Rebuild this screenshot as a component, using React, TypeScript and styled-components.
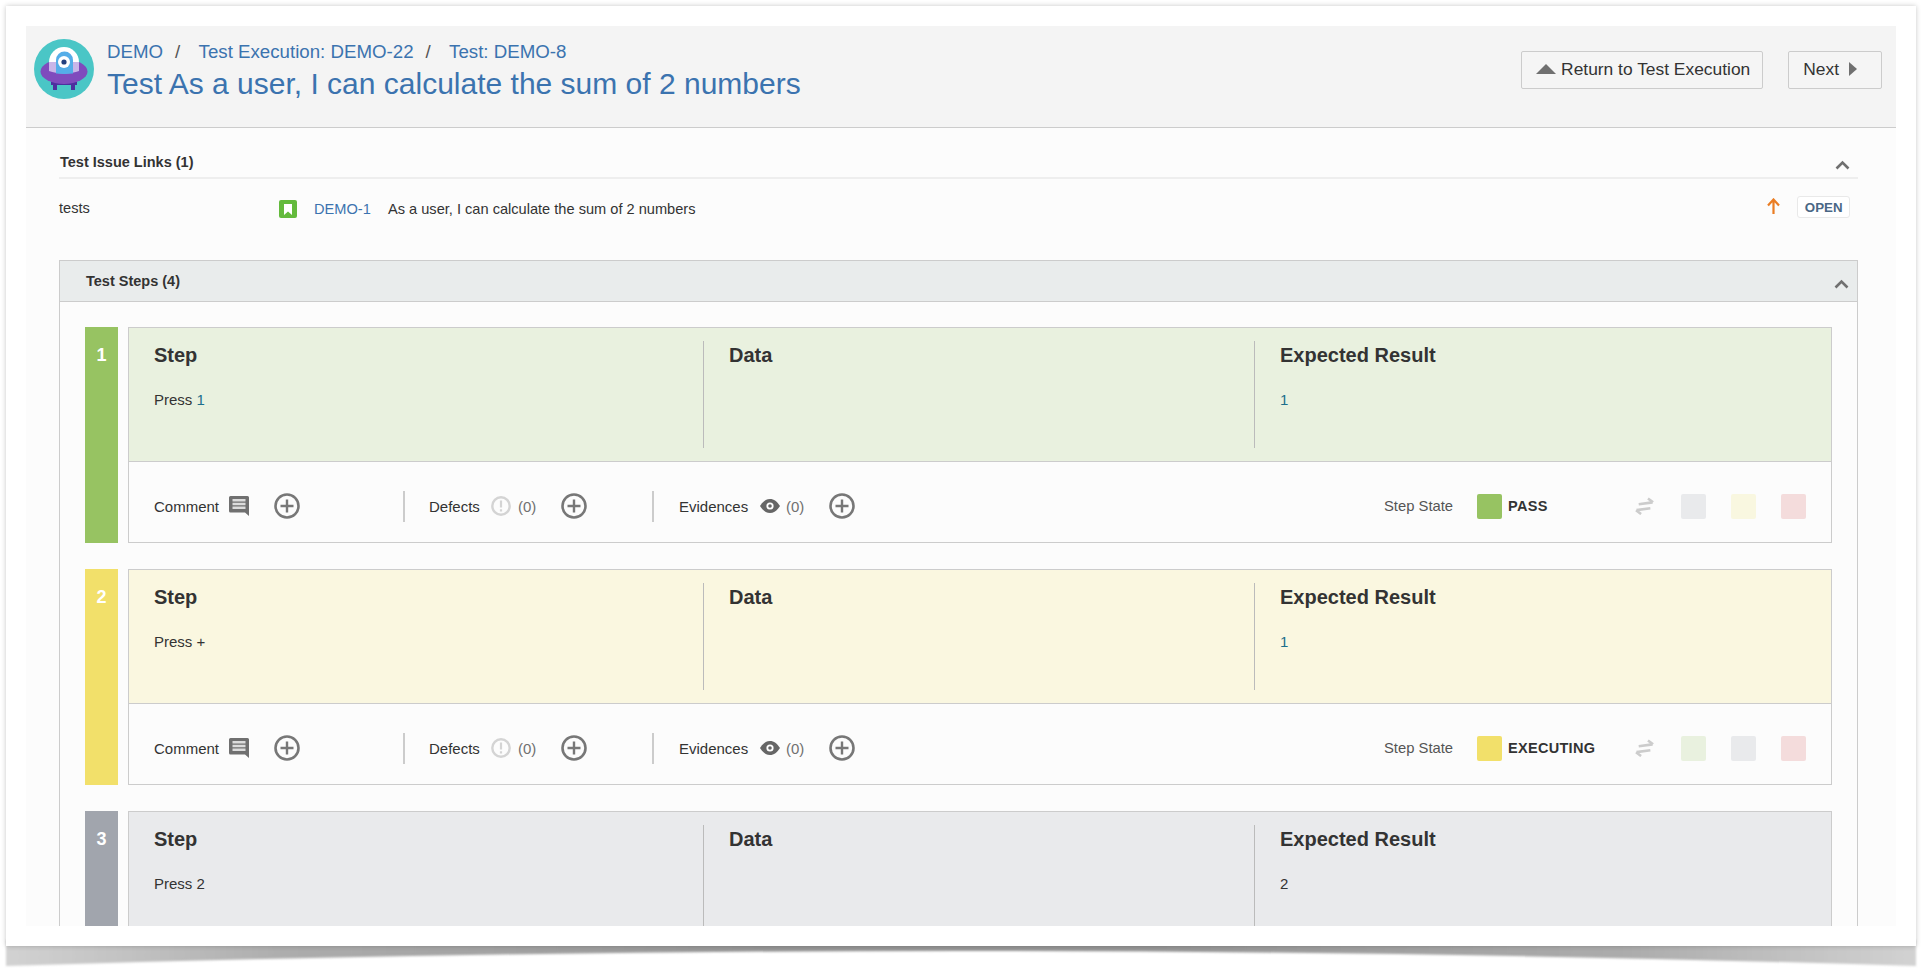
import React from 'react'
import styled, { createGlobalStyle } from 'styled-components'

const GlobalStyle = createGlobalStyle`
  html, body {
    margin: 0;
    background: #fff;
  }
  body {
    height: 975px;
    overflow: hidden;
    font-family: "Liberation Sans", Arial, sans-serif;
    color: #333;
  }
`

const Page = styled.div`
  position: relative;
  width: 1930px;
  height: 975px;
  padding: 6px 0 0 6px;
  box-sizing: border-box;
`

const PaperShadow = styled.svg`
  position: absolute;
  left: 0;
  top: 936px;
  width: 1930px;
  height: 39px;
`

const Card = styled.div`
  position: relative;
  width: 1910px;
  height: 940px;
  padding: 20px;
  box-sizing: border-box;
  background: #fff;
  box-shadow: 0 0 5px rgba(0, 0, 0, 0.22);
`

const Panel = styled.div`
  height: 900px;
  overflow: hidden;
  background: #fcfcfc;
`

const Header = styled.header`
  display: flex;
  height: 102px;
  box-sizing: border-box;
  padding: 13px 14px 0 8px;
  background: #f4f4f4;
  border-bottom: 1px solid #ccc;
`

const Titles = styled.div`
  margin-left: 13px;
  flex: 1;
`

const Crumbs = styled.div`
  display: flex;
  height: 26px;
  align-items: center;
  font-size: 18.7px;
`

const CrumbLink = styled.a`
  color: #3b73af;
`

const CrumbSep = styled.span`
  width: 35.5px;
  padding-left: 12px;
  box-sizing: border-box;
  color: #555;
`

const Title = styled.h1`
  margin: 1px 0 0;
  font-size: 30px;
  font-weight: 400;
  line-height: 36px;
  color: #3b73af;
`

const Actions = styled.div`
  display: flex;
  gap: 25px;
  padding-top: 12px;
`

const Button = styled.button<{ $right: number }>`
  display: flex;
  align-items: center;
  gap: 5px;
  height: 38px;
  padding: 0 ${p => p.$right}px 2px 14px;
  background: #f5f5f5;
  border: 1px solid #ccc;
  border-radius: 2px;
  color: #333;
  font-family: inherit;
  font-size: 17.4px;
`

const Body = styled.div`
  padding: 0 38px 0 33px;
`

const SectionHead = styled.div`
  display: flex;
  align-items: center;
  justify-content: space-between;
  height: 31px;
  padding: 18px 8px 0 1px;
  border-bottom: 2px solid #eee;
`

const SectionTitle = styled.h3`
  margin: 0;
  font-size: 14.5px;
  font-weight: 700;
  color: #333;
`

const LinkRow = styled.div`
  display: flex;
  align-items: flex-start;
  height: 81px;
  padding: 20px 8px 0 0;
  box-sizing: border-box;
  font-size: 14.6px;
`

const LinkType = styled.span`
  width: 220px;
  line-height: 18px;
`

const StoryBadge = styled.span`
  display: flex;
  justify-content: center;
  width: 18px;
  height: 18px;
  margin: 1px 17px 0 0;
  background: #63ba3c;
  border-radius: 2px;
`

const IssueKey = styled.a`
  width: 74px;
  line-height: 20px;
  color: #3b73af;
`

const IssueSummary = styled.span`
  flex: 1;
  line-height: 20px;
`

const PriorityMark = styled.svg`
  margin: -1px 17px 0 0;
`

const Lozenge = styled.span`
  display: flex;
  align-items: center;
  height: 20px;
  margin-top: -3px;
  padding: 0 6.5px;
  background: #fff;
  border: 1px solid #e9e9e9;
  border-radius: 3px;
  color: #4a6785;
  font-size: 13.3px;
  font-weight: 700;
`

const StepsBox = styled.section`
  border: 1px solid #ccc;
  border-bottom: 0;
`

const StepsHead = styled.div`
  display: flex;
  align-items: center;
  justify-content: space-between;
  height: 40px;
  padding: 0 8px 0 26px;
  background: #e9ecec;
  border-bottom: 1px solid #ccc;
`

const StepsList = styled.div`
  display: flex;
  flex-direction: column;
  gap: 26px;
  padding: 25px 25px 0;
`

const Step = styled.article`
  display: flex;
  gap: 10px;
  height: 216px;
`

const StepIndex = styled.div<{ $color: string }>`
  width: 33px;
  padding-top: 14px;
  box-sizing: border-box;
  background: ${p => p.$color};
  color: #fff;
  font-size: 18px;
  font-weight: 700;
  line-height: 28px;
  text-align: center;
`

const StepBox = styled.div`
  display: flex;
  flex: 1;
  flex-direction: column;
  border: 1px solid #ccc;
`

const StepFields = styled.div<{ $color: string }>`
  display: grid;
  grid-template-columns: 575px 551px 1fr;
  height: 107px;
  padding: 13px 0;
  background: ${p => p.$color};
  border-bottom: 1px solid #ccc;
`

const Field = styled.div<{ $last?: boolean }>`
  padding-left: 25px;
  border-right: ${p => (p.$last ? '0' : '1px solid #bbb')};
  font-size: 15px;
`

const FieldTitle = styled.h4`
  margin: 0 0 21px;
  font-size: 20px;
  font-weight: 700;
  line-height: 28px;
  color: #333;
`

const FieldValue = styled.div`
  line-height: 20px;
`

const Accent = styled.span`
  color: #1d6f8c;
`

const StepFooter = styled.div`
  display: flex;
  flex: 1;
  align-items: center;
  padding: 8px 25px 0 0;
  background: #fcfcfc;
  font-size: 15px;
`

const FooterGroup = styled.div<{ $width: number; $pad: number; $divided?: boolean }>`
  display: flex;
  align-items: center;
  width: ${p => p.$width}px;
  height: 31px;
  padding-left: ${p => p.$pad}px;
  box-sizing: border-box;
  border-left: ${p => (p.$divided ? '2px solid #ccc' : '0')};
`

const FooterLabel = styled.span<{ $width: number }>`
  width: ${p => p.$width}px;
`

const Count = styled.span<{ $width: number }>`
  width: ${p => p.$width}px;
  color: #707070;
`

const FooterIcon = styled.svg<{ $gap: number }>`
  margin-right: ${p => p.$gap}px;
`

const StateLabel = styled.span`
  margin-left: auto;
  width: 93px;
  font-size: 14.8px;
  color: #555;
`

const Swatch = styled.span<{ $color: string }>`
  display: block;
  width: 25px;
  height: 25px;
  background: ${p => p.$color};
  border-radius: 2px;
`

const StateName = styled.span`
  width: 131px;
  padding-left: 6px;
  box-sizing: border-box;
  font-size: 14.5px;
  font-weight: 700;
  letter-spacing: 0.3px;
`

const SwapIcon = styled.svg`
  margin-right: 25px;
`

const Swatches = styled.div`
  display: flex;
  gap: 25px;
`

const ChevronIcon = styled.svg`
  margin-top: 6px;
`

const Chevron = () => (
  <ChevronIcon width="15" height="10" viewBox="0 0 15 10">
    <path d="M1.5 8.5 7.5 2.5l6 6" fill="none" stroke="#707070" strokeWidth="2.6" />
  </ChevronIcon>
)

const Logo = () => (
  <svg width="60" height="60" viewBox="0 0 60 60">
    <circle cx="30" cy="30" r="30" fill="#4ac6c6" />
    <path d="M17 43h26v3h-2v5h-4v-5H23v5h-4v-5h-2z" fill="#4d2f9e" />
    <ellipse cx="30" cy="32.500" rx="23.500" ry="12.500" fill="#7f4bbd" />
    <path d="M15 23a15 15 0 0 1 30 0z" fill="#fff" />
    <path d="M15 23h30v9c-4 1.600-9 2.500-15 2.500s-11-.9-15-2.500z" fill="#c9b6e8" />
    <path d="M22 34.500V21a8.500 8.500 0 0 1 17 0v13.500c-5 .5-12 .5-17 0z" fill="#55ade8" />
    <circle cx="30" cy="23" r="6" fill="#fff" />
    <circle cx="30" cy="23" r="2.600" fill="#24407f" />
  </svg>
)

const StoryIcon = () => (
  <svg width="8" height="11" viewBox="0 0 8 11" style={{ marginTop: 4 }}>
    <path d="M0 0h8v11L4 7.500 0 11z" fill="#fff" />
  </svg>
)

const CommentIcon = () => (
  <FooterIcon $gap={25} width="20" height="20" viewBox="0 0 20 20">
    <path d="M0 1.500A1.500 1.500 0 0 1 1.500 0h17A1.500 1.500 0 0 1 20 1.500V20l-4-3.500H1.500A1.500 1.500 0 0 1 0 15z" fill="#707070" />
    <path d="M3.500 4.200h13M3.500 8h13M3.500 11.800h13" stroke="#dcdcdc" strokeWidth="2.400" />
  </FooterIcon>
)

const DefectIcon = () => (
  <FooterIcon $gap={7} width="20" height="20" viewBox="0 0 20 20">
    <circle cx="10" cy="10" r="8.700" fill="none" stroke="#d4d4d4" strokeWidth="2.400" />
    <path d="M10 4.500v7M10 13.300v2.200" stroke="#d4d4d4" strokeWidth="2.200" />
  </FooterIcon>
)

const EyeIcon = () => (
  <FooterIcon $gap={6} width="20" height="14" viewBox="0 0 20 14">
    <path d="M0 7c3-4.500 6-7 10-7s7 2.500 10 7c-3 4.500-6 7-10 7S3 11.500 0 7z" fill="#666" />
    <circle cx="10" cy="7" r="3.600" fill="#fff" />
    <circle cx="10" cy="7" r="1.800" fill="#666" />
  </FooterIcon>
)

const PlusIcon = () => (
  <svg width="26" height="26" viewBox="0 0 26 26">
    <circle cx="13" cy="13" r="11.500" fill="none" stroke="#777" strokeWidth="2.600" />
    <path d="M13 6.500v13M6.500 13h13" stroke="#777" strokeWidth="2.400" />
  </svg>
)

const Swap = () => (
  <SwapIcon width="23" height="18" viewBox="0 0 23 18">
    <g transform="rotate(-8 11.500 9)" fill="none" stroke="#ccc" strokeWidth="2.600">
      <path d="M6 6.500h14M16 2l4.500 4.500" />
      <path d="M17 12H3M7 16.500 2.500 12" />
    </g>
  </SwapIcon>
)

const steps = [
  {
    n: 1,
    bar: '#97c362',
    bg: '#e9f1df',
    step: <>Press <Accent>1</Accent></>,
    result: <Accent>1</Accent>,
    state: 'PASS',
    others: ['#e9eaec', '#f9f7e0', '#f4dcdc'],
  },
  {
    n: 2,
    bar: '#f2e06a',
    bg: '#faf7e0',
    step: <>Press +</>,
    result: <Accent>1</Accent>,
    state: 'EXECUTING',
    others: ['#e9f1df', '#e9eaec', '#f4dcdc'],
  },
  {
    // runs past the fold, only the fields part is ever visible
    n: 3,
    bar: '#a1a5ad',
    bg: '#e9eaec',
    step: <>Press 2</>,
    result: <>2</>,
  },
]

const App = () => (
  <Page>
    <GlobalStyle />
    <PaperShadow viewBox="0 0 1930 39">
      <defs>
        <linearGradient id="paperShade">
          <stop offset="0" stopColor="#d2d2d2" />
          <stop offset="0.15" stopColor="#acacac" />
          <stop offset="0.4" stopColor="#969696" />
          <stop offset="0.6" stopColor="#969696" />
          <stop offset="0.85" stopColor="#acacac" />
          <stop offset="1" stopColor="#d2d2d2" />
        </linearGradient>
        <filter id="paperBlur" x="-2%" y="-20%" width="104%" height="140%">
          <feGaussianBlur stdDeviation="1.200" />
        </filter>
      </defs>
      <path d="M6 4H1916V30Q961 0 6 30Z" fill="url(#paperShade)" filter="url(#paperBlur)" />
    </PaperShadow>
    <Card>
      <Panel>
        <Header>
          <Logo />
          <Titles>
            <Crumbs>
              <CrumbLink>DEMO</CrumbLink>
              <CrumbSep>/</CrumbSep>
              <CrumbLink>Test Execution: DEMO-22</CrumbLink>
              <CrumbSep>/</CrumbSep>
              <CrumbLink>Test: DEMO-8</CrumbLink>
            </Crumbs>
            <Title>Test As a user, I can calculate the sum of 2 numbers</Title>
          </Titles>
          <Actions>
            <Button $right={12}>
              <svg width="20" height="10" viewBox="0 0 20 10"><path d="M10 0l10 10H0z" fill="#707070" /></svg>
              Return to Test Execution
            </Button>
            <Button $right={24}>
              Next
              <svg width="8" height="14" viewBox="0 0 8 14" style={{ marginLeft: 5 }}><path d="M0 0l8 7-8 7z" fill="#707070" /></svg>
            </Button>
          </Actions>
        </Header>
        <Body>
          <SectionHead>
            <SectionTitle>Test Issue Links (1)</SectionTitle>
            <Chevron />
          </SectionHead>
          <LinkRow>
            <LinkType>tests</LinkType>
            <StoryBadge><StoryIcon /></StoryBadge>
            <IssueKey>DEMO-1</IssueKey>
            <IssueSummary>As a user, I can calculate the sum of 2 numbers</IssueSummary>
            <PriorityMark width="13" height="16" viewBox="0 0 13 16">
              <path d="M6.500 16V2M1 7.500l5.500-6 5.500 6" fill="none" stroke="#ea7d24" strokeWidth="2.200" />
            </PriorityMark>
            <Lozenge>OPEN</Lozenge>
          </LinkRow>
          <StepsBox>
            <StepsHead>
              <SectionTitle>Test Steps (4)</SectionTitle>
              <Chevron />
            </StepsHead>
            <StepsList>
              {steps.map(s => (
                <Step key={s.n}>
                  <StepIndex $color={s.bar}>{s.n}</StepIndex>
                  <StepBox>
                    <StepFields $color={s.bg}>
                      <Field>
                        <FieldTitle>Step</FieldTitle>
                        <FieldValue>{s.step}</FieldValue>
                      </Field>
                      <Field>
                        <FieldTitle>Data</FieldTitle>
                      </Field>
                      <Field $last>
                        <FieldTitle>Expected Result</FieldTitle>
                        <FieldValue>{s.result}</FieldValue>
                      </Field>
                    </StepFields>
                    {s.state && (
                      <StepFooter>
                        <FooterGroup $pad={25} $width={274}>
                          <FooterLabel $width={75}>Comment</FooterLabel>
                          <CommentIcon />
                          <PlusIcon />
                        </FooterGroup>
                        <FooterGroup $divided $pad={24} $width={249}>
                          <FooterLabel $width={62}>Defects</FooterLabel>
                          <DefectIcon />
                          <Count $width={43}>(0)</Count>
                          <PlusIcon />
                        </FooterGroup>
                        <FooterGroup $divided $pad={25} $width={250}>
                          <FooterLabel $width={81}>Evidences</FooterLabel>
                          <EyeIcon />
                          <Count $width={43}>(0)</Count>
                          <PlusIcon />
                        </FooterGroup>
                        <StateLabel>Step State</StateLabel>
                        <Swatch $color={s.bar} />
                        <StateName>{s.state}</StateName>
                        <Swap />
                        <Swatches>
                          {s.others.map(c => <Swatch key={c} $color={c} />)}
                        </Swatches>
                      </StepFooter>
                    )}
                  </StepBox>
                </Step>
              ))}
            </StepsList>
          </StepsBox>
        </Body>
      </Panel>
    </Card>
  </Page>
)

export default App
